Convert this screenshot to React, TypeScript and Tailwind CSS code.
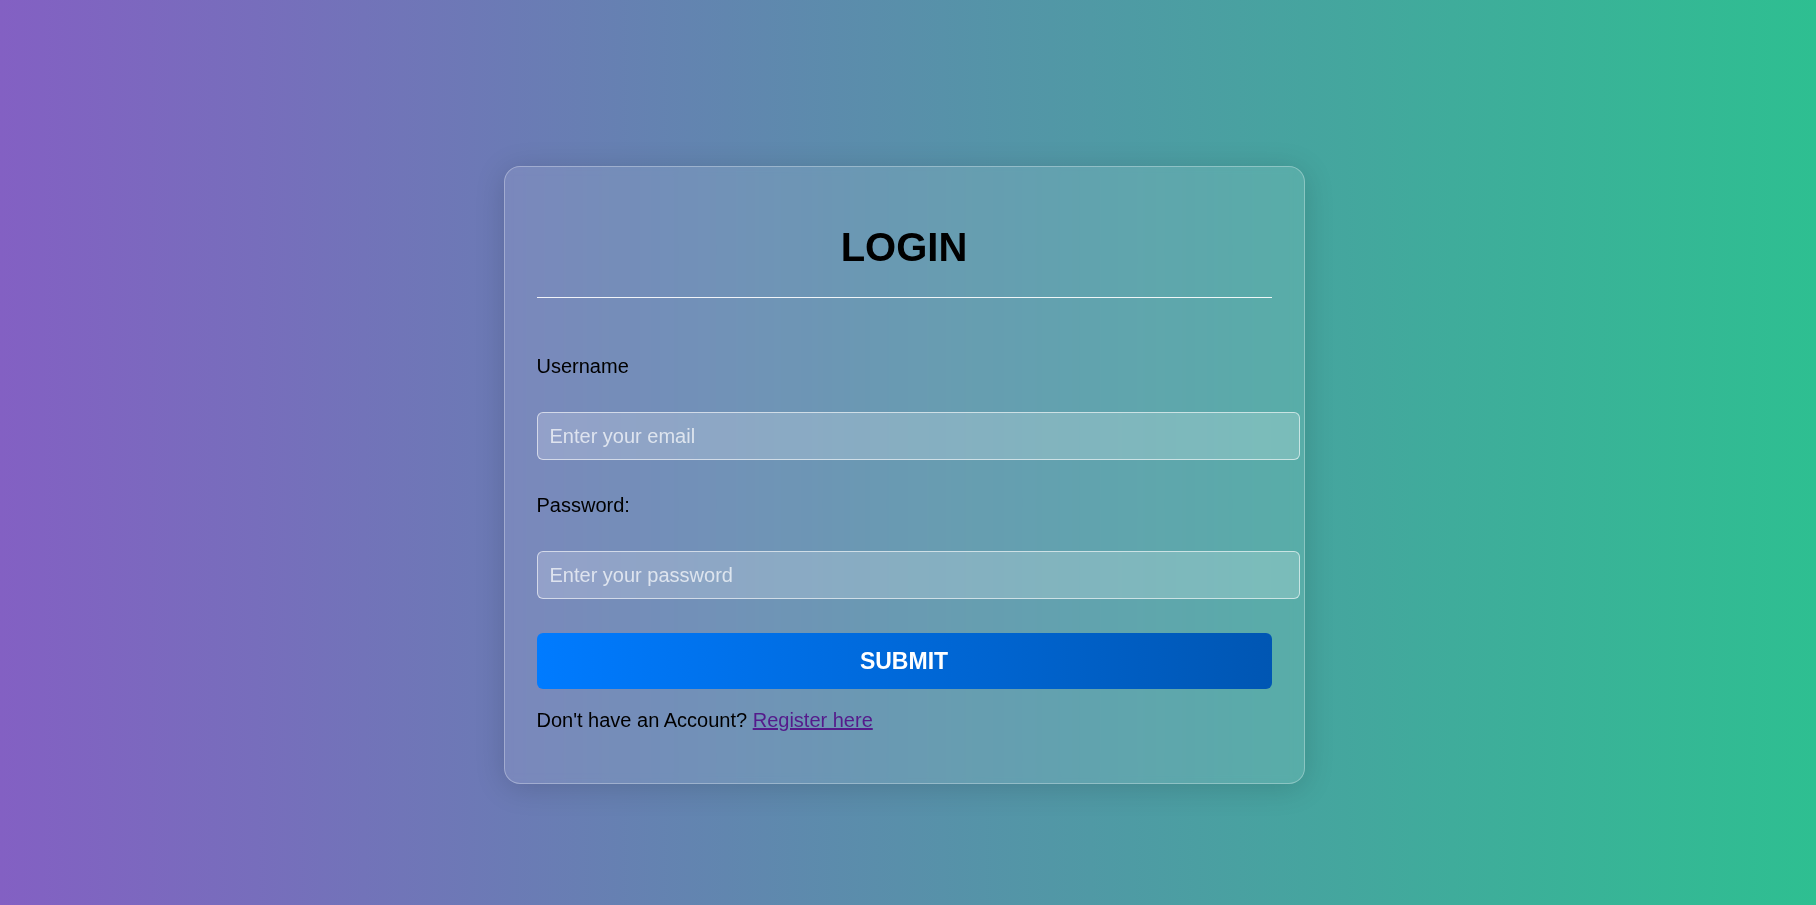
export default function App() {
  return (
    <div
      className="min-h-screen w-full flex justify-center pr-2 pt-[166px] bg-[linear-gradient(90deg,#8360c3,#2ebf91)]"
      style={{ fontFamily: '"Liberation Sans", Arial, sans-serif' }}
    >
      <form
        onSubmit={(e) => e.preventDefault()}
        className="w-[801px] self-start rounded-[16px] border border-white/30 bg-white/10 px-8 pt-[57px] pb-[51px] shadow-[0_4px_30px_rgba(0,0,0,0.15)] backdrop-blur-[5px]"
      >
        <h2 className="text-center text-[40px] leading-[46px] font-bold text-black pb-[27px] border-b border-white/90">
          LOGIN
        </h2>

        <label htmlFor="email" className="block mt-[57px] text-[20px] leading-[23px] text-black">
          Username
        </label>
        <input
          id="email"
          type="email"
          placeholder="Enter your email"
          className="block mt-[34px] h-[48px] w-[calc(100%+28px)] rounded-[6px] border border-white/60 bg-white/20 px-3 text-[20px] text-black outline-none placeholder:text-white/70"
        />

        <label htmlFor="password" className="block mt-[34px] text-[20px] leading-[23px] text-black">
          Password:
        </label>
        <input
          id="password"
          type="password"
          placeholder="Enter your password"
          className="block mt-[34px] h-[48px] w-[calc(100%+28px)] rounded-[6px] border border-white/60 bg-white/20 px-3 text-[20px] text-black outline-none placeholder:text-white/70"
        />

        <button
          type="submit"
          className="block mt-[34px] h-[56px] w-full rounded-[6px] bg-[linear-gradient(90deg,#007bff,#0056b3)] text-[23px] font-bold text-white"
        >
          SUBMIT
        </button>

        <p className="mt-[20px] text-[20px] leading-[23px] text-black">
          Don't have an Account?{' '}
          <a href="#" className="text-[#551a8b] underline">
            Register here
          </a>
        </p>
      </form>
    </div>
  );
}
